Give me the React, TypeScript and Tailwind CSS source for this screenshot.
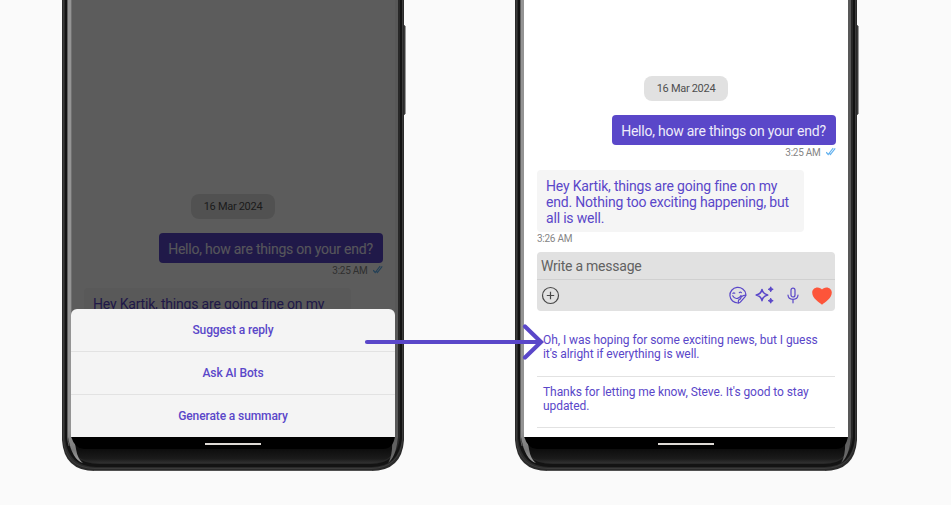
import React from "react";

function PhoneBody({ id }: { id: string }) {
  return (
    <svg className="absolute left-0 top-0" width="346" height="473" viewBox="0 0 346 473" fill="none">
      <defs>
        <linearGradient id={id + "b"} x1="0" y1="449" x2="0" y2="463" gradientUnits="userSpaceOnUse">
          <stop stopColor="#0d0d0d" />
          <stop offset="0.7" stopColor="#1b1b1b" />
          <stop offset="1" stopColor="#303030" />
        </linearGradient>
        <linearGradient id={id + "g"} x1="0" y1="430" x2="0" y2="464" gradientUnits="userSpaceOnUse">
          <stop stopColor="#949494" />
          <stop offset="0.6" stopColor="#7a7a7a" />
          <stop offset="1" stopColor="#a8a8a8" />
        </linearGradient>
        <linearGradient id={id + "r"} x1="0" y1="430" x2="0" y2="464" gradientUnits="userSpaceOnUse">
          <stop stopColor="#585858" />
          <stop offset="1" stopColor="#6c6c6c" />
        </linearGradient>
      </defs>
      <rect x="340" y="25" width="3" height="90" rx="1" fill="#383838" />
      <path d="M343.5 26V114" stroke="#999" />
      <path d="M0 -10H342V440Q340 471 309 471H33Q2 471 0 440Z" fill="#2a2a2a" />
      <path d="M1.5 -10V439Q3 468 33 468.500H309Q338 468 340.500 439V-10" stroke="#484848" strokeWidth="1" opacity="0.6" />
      <path d="M3 -10H340V438Q337 467 309 467H35Q6 467 3 438Z" fill="#131313" />
      <path d="M5 -10H338V437Q335 464 309 464H37Q9 464 5 437Z" fill="#282828" />
      <path d="M6 -10H336V437Q334 463 309 463H37Q10 463 6 437Z" fill={"url(#" + id + "b)"} />
      <path d="M5.500 -10V437Q6 442 7 446" stroke="#606060" />
      <path d="M6 -10H10V437Q13 441 14 449Q15.500 459 21 463Q10 460 6 437Z" fill={"url(#" + id + "g)"} />
      <path d="M336 -10H332V437Q330 441 330 449Q329 459 326 463Q334 457 336 437Z" fill={"url(#" + id + "r)"} />
      <path d="M9 436.500H333Q331 449 321 449H22Q13 449 9 436.500Z" fill="#000" />
      <path d="M32 470.500H310" stroke="#505050" />
      <path d="M143 444H199" stroke="#dedad6" strokeWidth="2" />
    </svg>
  );
}

function Phone({ id, children }: { id: string; children: React.ReactNode }) {
  return (
    <div className="relative h-[473px] w-[346px] shrink-0 pl-[9px]">
      <PhoneBody id={id} />
      <div className="relative h-[437px] w-[324px] overflow-hidden bg-white">{children}</div>
    </div>
  );
}

const replyLines = [
  "Hey Kartik, things are going fine on my",
  "end. Nothing too exciting happening, but",
  "all is well.",
];

function Conversation({ collapsed = false }: { collapsed?: boolean }) {
  const lines = collapsed ? replyLines.slice(0, 1) : replyLines;
  return (
    <div className="flex flex-col pl-[13px] pr-[12.5px]">
      <div className="mr-[0.5px] flex h-[24.5px] w-[84px] items-center justify-center self-center rounded-lg bg-[#e1e1e1] pt-[1.5px] text-[11px] tracking-[-0.3px] text-[#4f4f4f]">
        <span className="whitespace-nowrap">16 Mar 2024</span>
      </div>
      <div className="mt-[14.5px] flex h-[30px] w-[224px] items-center justify-center self-end rounded-[4px] bg-[#5a47c9] pt-[2px] text-[14px] tracking-[-0.23px] text-[#eeecfa]">
        <span className="whitespace-nowrap">Hello, how are things on your end?</span>
      </div>
      <div className="flex h-[14px] items-center justify-end gap-[5px] text-[10px] tracking-[-0.27px] text-[#858585]">
        <span>3:25 AM</span>
        <svg className="mb-[2px]" width="10" height="9" viewBox="0 0 10 9" fill="none" stroke="#64b2ef" strokeWidth="1.200">
          <path d="M.2 5.200L2.200 7.500L7.200 1M3.400 6.200L4.400 7.500L9.200 1.300" />
        </svg>
      </div>
      <div className="mt-[11px] h-[62px] w-[267px] rounded-[4px] bg-[#f5f5f5] pl-[9px] pt-[8px] text-[14px] leading-[16px] tracking-[-0.19px] text-[#5a47c9]">
        {lines.map((line) => (
          <div key={line} className="whitespace-nowrap">{line}</div>
        ))}
      </div>
      {!collapsed && (
        <div className="flex h-[14px] items-center pb-px text-[10px] tracking-[-0.27px] text-[#858585]">3:26 AM</div>
      )}
    </div>
  );
}

function Composer() {
  return (
    <div className="ml-[13px] mt-[6px] h-[59px] w-[298px] rounded-[4px] bg-[#e1e1e1]">
      <div className="flex h-[28px] items-center border-b border-[#d0d0d0] pl-[4px] pt-[2px] text-[14px] tracking-[-0.24px] text-[#626262]">
        <span className="whitespace-nowrap">Write a message</span>
      </div>
      <div className="flex h-[31px] items-center pl-[4px] pr-[3px]">
        <svg width="19" height="19" viewBox="0 0 19 19" fill="none" stroke="#484848" strokeWidth="1.200">
          <circle cx="9.500" cy="9.500" r="8" />
          <path d="M9.500 5.800V13.200M5.800 9.500H13.200" />
        </svg>
        <svg className="mb-px ml-auto" width="18" height="18" viewBox="0 0 18 18" fill="none" stroke="#5a47c9" strokeWidth="1.200" strokeLinecap="round" strokeLinejoin="round">
          <path d="M16.800 8A8 7.800 0 1 0 9.200 17Q10.500 17 11.300 16.200L16 10.800Q17 9.600 16.800 8Z" />
          <path d="M9.500 17Q8.700 13.400 11.500 12.800Q12 9.500 16.800 9.200M3.700 9.800Q5.500 13.200 8.700 12.300Q11 11.600 12 9.600M3.900 7.400Q4.800 6.400 5.800 7.200M10.300 6.700Q11.300 5.700 12.400 6.600" />
        </svg>
        <svg className="mb-px ml-[8px]" width="19" height="18" viewBox="0 0 19 18" fill="none" stroke="#5a47c9">
          <path d="M7 3.500Q7.900 8 12.700 9Q7.900 10 7 14.700Q6.100 10 1.200 9Q6.100 8 7 3.500Z" strokeWidth="1.500" strokeLinejoin="round" />
          <path d="M15.700 .8Q16 3 18.200 3.300Q16 3.600 15.700 5.800Q15.400 3.600 13.200 3.300Q15.400 3 15.700 .8ZM15.700 12.200Q16 14.400 18.200 14.700Q16 15 15.700 17.200Q15.400 15 13.200 14.700Q15.400 14.400 15.700 12.200Z" fill="#5a47c9" strokeWidth="1" />
        </svg>
        <svg className="ml-[13px]" width="12" height="18" viewBox="0 0 12 18" fill="none" stroke="#5a47c9" strokeWidth="1.200" strokeLinecap="round">
          <rect x="4" y="1.200" width="4" height="8.800" rx="2" />
          <path d="M1 8Q1.200 12.300 6 12.300Q10.800 12.300 11 8M6 12.500V15.800" />
        </svg>
        <svg className="ml-[13px]" width="20" height="18" viewBox="0 0 20 18">
          <path d="M10 17.700C7.500 15.700 .2 11.500 .2 5.500C.2 2.500 2.600 .4 5.500 .4C7.600 .4 9.200 1.400 10 2.600C10.800 1.400 12.400 .4 14.500 .4C17.400 .4 19.800 2.500 19.800 5.500C19.800 11.500 12.500 15.700 10 17.700Z" fill="#fd553a" />
        </svg>
      </div>
    </div>
  );
}

export default function App() {
  return (
    <div className="relative flex h-[505px] w-[951px] gap-[107px] overflow-hidden bg-[#fafafa] pl-[62px] font-['Roboto',sans-serif]">
      <Phone id="left">
        <div className="pt-[194px]">
          <Conversation collapsed />
        </div>
        <div className="absolute inset-0 border-l border-[#707070] bg-black/64" />
        <div className="absolute inset-x-0 bottom-0 flex flex-col rounded-t-[6px] bg-[#f4f4f4] text-[12px] font-medium tracking-[-0.11px] text-[#5a47c9]">
          <div className="flex h-[43px] items-center justify-center border-b border-[#e2e2e2]">Suggest a reply</div>
          <div className="flex h-[43px] items-center justify-center border-b border-[#e2e2e2]">Ask AI Bots</div>
          <div className="flex h-[42px] items-center justify-center">Generate a summary</div>
        </div>
      </Phone>
      <Phone id="right">
        <div className="pt-[76px]">
          <Conversation />
          <Composer />
          <div className="ml-[13px] flex w-[298px] flex-col text-[12px] leading-[14px] tracking-[-0.07px] text-[#5a47c9]">
            <div className="h-[66px] border-b border-[#e2e2e2] pl-[6px] pt-[22px]">
              <div className="whitespace-nowrap">Oh, I was hoping for some exciting news, but I guess</div>
              <div className="whitespace-nowrap">it's alright if everything is well.</div>
            </div>
            <div className="h-[51px] border-b border-[#e2e2e2] pl-[6px] pt-[8px]">
              <div className="whitespace-nowrap">Thanks for letting me know, Steve. It's good to stay</div>
              <div className="whitespace-nowrap">updated.</div>
            </div>
          </div>
        </div>
      </Phone>
      <svg className="absolute left-[363px] top-[322px]" width="182" height="40" viewBox="0 0 182 40" fill="none" stroke="#5a47c9" strokeWidth="4.200" strokeLinecap="round">
        <path d="M4 20H177M162 4.500L178 20L162 35.500" />
      </svg>
    </div>
  );
}
